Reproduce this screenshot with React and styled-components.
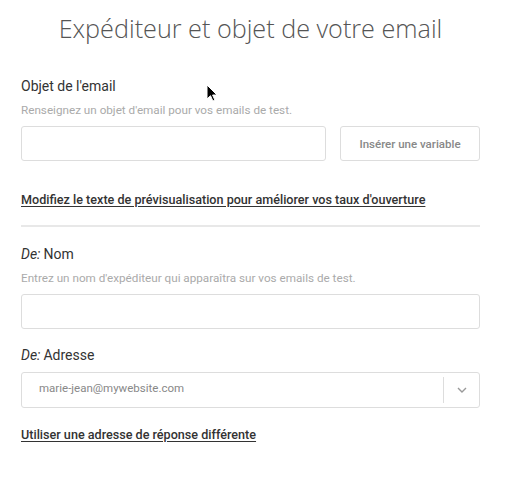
import React from 'react';
import styled, { createGlobalStyle } from 'styled-components';

const GlobalStyle = createGlobalStyle`
  html, body {
    margin: 0;
    padding: 0;
    background: #fff;
  }
  body {
    font-family: Roboto, "Liberation Sans", sans-serif;
    color: #333;
  }
`;

const Page = styled.main`
  position: relative;
  width: 513px;
  height: 477px;
  box-sizing: border-box;
  padding: 12px 33px 0 21px;
  overflow: hidden;
`;

const Title = styled.h1`
  margin: 0;
  text-align: center;
  font-family: "Open Sans", sans-serif;
  font-weight: 300;
  font-size: 25.2px;
  line-height: 32px;
  color: #555;
`;

const Section = styled.section`
  display: flex;
  flex-direction: column;
  margin-top: ${(p) => p.top}px;
`;

const Label = styled.label`
  font-size: 14px;
  line-height: 18px;
  color: #333;
  em {
    font-style: italic;
    margin-right: 3px;
  }
`;

const Hint = styled.p`
  margin: 8px 0 0;
  font-size: 11.7px;
  line-height: 14px;
  color: #aaa;
`;

const Row = styled.div`
  display: flex;
  gap: 14px;
  margin-top: ${(p) => p.top || 10}px;
`;

const Input = styled.input`
  flex: 1;
  box-sizing: border-box;
  height: 35px;
  border: 1px solid #ddd;
  border-radius: 3px;
  background: #fff;
  outline: none;
`;

const Button = styled.button`
  width: 140px;
  height: 35px;
  box-sizing: border-box;
  border: 1px solid #ddd;
  border-radius: 3px;
  background: #fff;
  font-family: Roboto, sans-serif;
  font-weight: 500;
  font-size: 11.5px;
  color: #888;
`;

const TextLink = styled.a`
  display: block;
  margin-top: ${(p) => p.top}px;
  font-size: 12.6px;
  font-weight: 500;
  line-height: 16px;
  color: #333;
  text-decoration: underline;
  text-underline-offset: 2px;
`;

const Divider = styled.hr`
  margin: 17px 0 0;
  border: none;
  height: 2px;
  background: #e8e8e8;
`;

const Select = styled.div`
  display: flex;
  align-items: center;
  height: 36px;
  box-sizing: border-box;
  margin-top: 8px;
  border: 1px solid #ddd;
  border-radius: 3px;
  background: #fff;
`;

const SelectValue = styled.span`
  flex: 1;
  padding-left: 17px;
  margin-top: -4px;
  font-size: 11.5px;
  color: #888;
`;

const SelectToggle = styled.span`
  display: flex;
  align-items: center;
  justify-content: center;
  width: 35px;
  height: 26px;
  border-left: 1px solid #ddd;
`;

const Cursor = styled.svg`
  position: absolute;
  left: 206px;
  top: 84px;
`;

export default function App() {
  return (
    <Page>
      <GlobalStyle />
      <Title>Expéditeur et objet de votre email</Title>

      <Section top={33}>
        <Label>Objet de l'email</Label>
        <Hint>Renseignez un objet d'email pour vos emails de test.</Hint>
        <Row top={9}>
          <Input />
          <Button>Insérer une variable</Button>
        </Row>
      </Section>

      <TextLink top={31}>Modifiez le texte de prévisualisation pour améliorer vos taux d'ouverture</TextLink>
      <Divider />

      <Section top={18}>
        <Label><em>De:</em>Nom</Label>
        <Hint>Entrez un nom d'expéditeur qui apparaîtra sur vos emails de test.</Hint>
        <Row top={9}>
          <Input />
        </Row>
      </Section>

      <Section top={17}>
        <Label><em>De:</em>Adresse</Label>
        <Select>
          <SelectValue>marie-jean@mywebsite.com</SelectValue>
          <SelectToggle>
            <svg width="10" height="6" viewBox="0 0 10 6">
              <path d="M1 1l4 4 4-4" fill="none" stroke="#999" strokeWidth="1.4" />
            </svg>
          </SelectToggle>
        </Select>
      </Section>

      <TextLink top={19}>Utiliser une adresse de réponse différente</TextLink>

      <Cursor width="12" height="18" viewBox="0 0 12 18">
        <path d="M1 1v14l3.5-3.3 2.4 5.3 2-0.9-2.3-5.1H11z" fill="#000" stroke="#fff" strokeWidth="1" />
      </Cursor>
    </Page>
  );
}
